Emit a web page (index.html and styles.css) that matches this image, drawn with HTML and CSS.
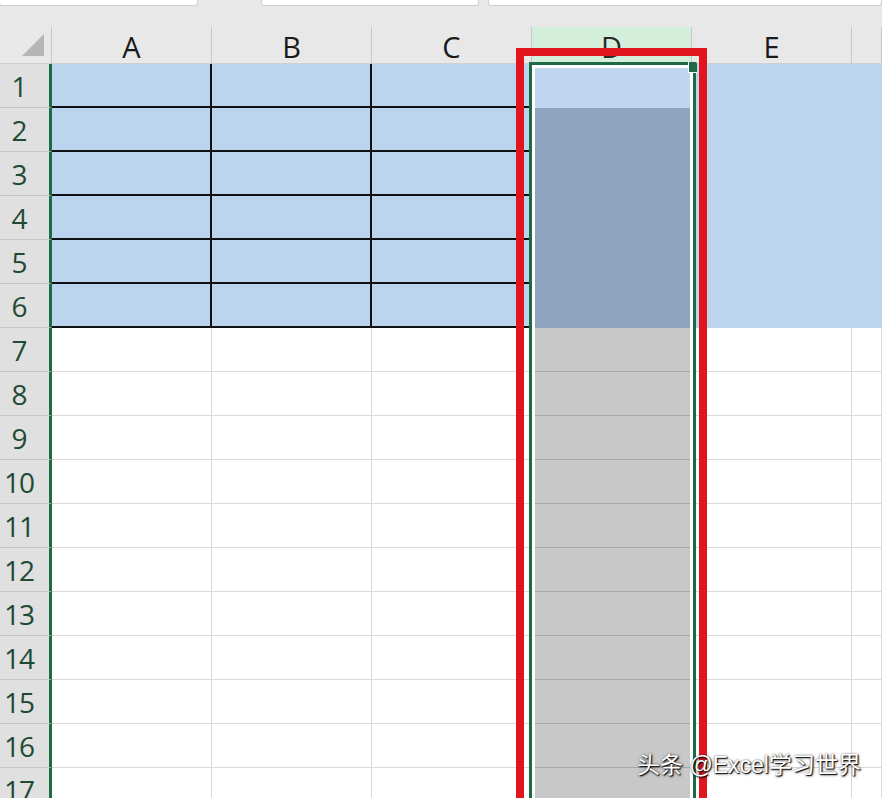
FILE: index.html
```html
<!DOCTYPE html>
<html lang="zh">
<head>
<meta charset="utf-8">
<title>Excel</title>
<link rel="stylesheet" href="styles.css">
</head>
<body>
<div class="sheet">
  <div class="tabs">
    <div class="tab t1"></div>
    <div class="tab t2"></div>
    <div class="tab t3"></div>
  </div>
  <div class="grid">
    <div class="corner"><svg class="tri" width="22" height="22" viewBox="0 0 22 22"><polygon points="22,0 22,22 0,22" fill="#b5b5b5"/></svg></div>
    <div class="ch">A</div><div class="ch">B</div><div class="ch">C</div><div class="ch chs">D</div><div class="ch">E</div><div class="ch"></div>

    <div class="rh">1</div><div class="c b"></div><div class="c b"></div><div class="c b"></div><div class="c d1"></div><div class="c bl"></div><div class="c bl"></div>
    <div class="rh">2</div><div class="c b"></div><div class="c b"></div><div class="c b"></div><div class="c ds"></div><div class="c bl"></div><div class="c bl"></div>
    <div class="rh">3</div><div class="c b"></div><div class="c b"></div><div class="c b"></div><div class="c ds"></div><div class="c bl"></div><div class="c bl"></div>
    <div class="rh">4</div><div class="c b"></div><div class="c b"></div><div class="c b"></div><div class="c ds"></div><div class="c bl"></div><div class="c bl"></div>
    <div class="rh">5</div><div class="c b"></div><div class="c b"></div><div class="c b"></div><div class="c ds"></div><div class="c bl"></div><div class="c bl"></div>
    <div class="rh">6</div><div class="c b"></div><div class="c b"></div><div class="c b"></div><div class="c ds"></div><div class="c bl"></div><div class="c bl"></div>
    <div class="rh">7</div><div class="c w"></div><div class="c w"></div><div class="c w"></div><div class="c dg"></div><div class="c w"></div><div class="c w"></div>
    <div class="rh">8</div><div class="c w"></div><div class="c w"></div><div class="c w"></div><div class="c dg"></div><div class="c w"></div><div class="c w"></div>
    <div class="rh">9</div><div class="c w"></div><div class="c w"></div><div class="c w"></div><div class="c dg"></div><div class="c w"></div><div class="c w"></div>
    <div class="rh">10</div><div class="c w"></div><div class="c w"></div><div class="c w"></div><div class="c dg"></div><div class="c w"></div><div class="c w"></div>
    <div class="rh">11</div><div class="c w"></div><div class="c w"></div><div class="c w"></div><div class="c dg"></div><div class="c w"></div><div class="c w"></div>
    <div class="rh">12</div><div class="c w"></div><div class="c w"></div><div class="c w"></div><div class="c dg"></div><div class="c w"></div><div class="c w"></div>
    <div class="rh">13</div><div class="c w"></div><div class="c w"></div><div class="c w"></div><div class="c dg"></div><div class="c w"></div><div class="c w"></div>
    <div class="rh">14</div><div class="c w"></div><div class="c w"></div><div class="c w"></div><div class="c dg"></div><div class="c w"></div><div class="c w"></div>
    <div class="rh">15</div><div class="c w"></div><div class="c w"></div><div class="c w"></div><div class="c dg"></div><div class="c w"></div><div class="c w"></div>
    <div class="rh">16</div><div class="c w"></div><div class="c w"></div><div class="c w"></div><div class="c dg"></div><div class="c w"></div><div class="c w"></div>
    <div class="rh">17</div><div class="c w"></div><div class="c w"></div><div class="c w"></div><div class="c dg"></div><div class="c w"></div><div class="c w"></div>
  </div>

  <div class="selection"></div>
  <div class="handle"></div>
  <div class="redbox"></div>
  <div class="watermark">头条 @Excel学习世界</div>
</div>
</body>
</html>
```

FILE: styles.css
```css
html, body {
  margin: 0;
  padding: 0;
  background: #ffffff;
}

.sheet {
  position: relative;
  width: 882px;
  height: 798px;
  overflow: hidden;
  background: #e8e8e8;
  font-family: "Open Sans", "Noto Sans", sans-serif;
}

.tabs {
  display: flex;
  height: 27px;
  align-items: flex-start;
  background: #e8e8e8;
}

.tab {
  height: 5px;
  background: #ffffff;
  border: 1px solid #cfcfcf;
  border-top: none;
  border-radius: 0 0 3px 3px;
}

.t1 { width: 197px; margin-left: -1px; }
.t2 { width: 216px; margin-left: 63px; }
.t3 { width: 392px; margin-left: 9px; }

.grid {
  display: grid;
  grid-template-columns: 52px repeat(5, 160px) 30px;
  grid-template-rows: 37px repeat(17, 44px);
}

.corner {
  box-sizing: border-box;
  border-right: 1px solid #c8c8c8;
  border-bottom: 1px solid #cfcfcf;
  display: flex;
  justify-content: flex-end;
  align-items: flex-end;
  padding: 0 7px 7px 0;
}

.ch {
  box-sizing: border-box;
  border-right: 1px solid #c8c8c8;
  border-bottom: 1px solid #cfcfcf;
  display: flex;
  justify-content: center;
  align-items: center;
  padding-top: 3px;
  font-size: 29px;
  line-height: 1;
  color: #1a1a1a;
}

.chs {
  background: #d3efdc;
  color: #2a2a2a;
}

.rh {
  box-sizing: border-box;
  background: #e0e0e0;
  border-bottom: 1px solid #c6c6c6;
  border-right: 3px solid #1e6a45;
  display: flex;
  justify-content: center;
  align-items: center;
  padding-right: 11px;
  font-size: 28px;
  line-height: 1;
  color: #1f4a35;
  letter-spacing: -1px;
}

.c {
  box-sizing: border-box;
}

.b {
  background: #bcd5ee;
  border-right: 2px solid #111111;
  border-bottom: 2px solid #111111;
}

.bl {
  background: #bcd5ee;
}

.d1 {
  background: #bfd7ef;
}

.ds {
  background: #8fa4bd;
}

.dg {
  background: #c8c8c9;
  border-bottom: 1px solid #a7a7a8;
}

.w {
  background: #ffffff;
  border-right: 1px solid #d9d9d9;
  border-bottom: 1px solid #d9d9d9;
}

.selection {
  position: absolute;
  left: 529px;
  top: 62px;
  width: 167px;
  height: 800px;
  box-sizing: border-box;
  border: 3px solid #1e6a45;
  box-shadow: inset 0 0 0 3px #ffffff;
}

.handle {
  position: absolute;
  left: 688px;
  top: 62px;
  width: 8px;
  height: 10px;
  background: #1e6a45;
  border-left: 1px solid #ffffff;
  border-bottom: 1px solid #ffffff;
  border-top-right-radius: 2px;
}

.redbox {
  position: absolute;
  left: 516px;
  top: 48px;
  width: 191px;
  height: 800px;
  box-sizing: border-box;
  border: 8px solid #e2151f;
}

.watermark {
  position: absolute;
  left: 637px;
  top: 750px;
  font-family: "Liberation Sans", "Noto Sans CJK SC", sans-serif;
  font-size: 23px;
  line-height: 30px;
  color: #ffffff;
  white-space: nowrap;
  text-shadow: 1px 1px 1px rgba(0, 0, 0, 0.9), 1px 1px 3px rgba(0, 0, 0, 0.6), 0 0 2px rgba(0, 0, 0, 0.5);
}
```
